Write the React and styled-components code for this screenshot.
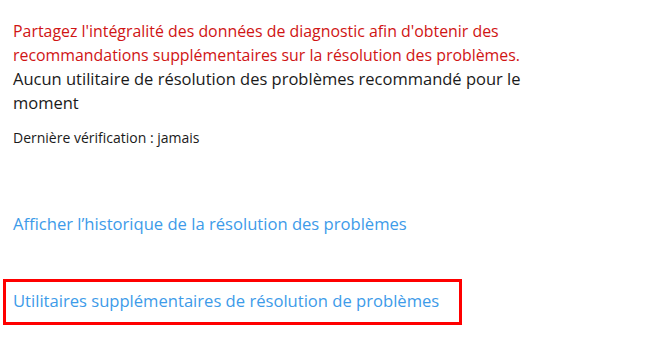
import React from 'react';
import styled, { createGlobalStyle } from 'styled-components';

const GlobalStyle = createGlobalStyle`
  html, body {
    margin: 0;
    padding: 0;
    background: #ffffff;
  }
  body {
    font-family: 'Open Sans', 'Noto Sans', 'Liberation Sans', sans-serif;
  }
`;

// 전체 페이지
const Page = styled.div`
  width: 658px;
  height: 355px;
  box-sizing: border-box;
  padding: 19px 0 0 13px;
  display: flex;
  flex-direction: column;
`;

const Warning = styled.p`
  margin: 0;
  width: 528px;
  font-size: 15.9px;
  line-height: 24px;
  color: #d01414;
`;

const Status = styled.p`
  margin: 0;
  width: 528px;
  font-size: 16.5px;
  line-height: 24px;
  color: #1a1a1a;
`;

const Checked = styled.p`
  margin: 14px 0 0;
  font-size: 14px;
  line-height: 18px;
  color: #1a1a1a;
`;

const Link = styled.a`
  font-size: 16.6px;
  line-height: 24px;
  color: #3d9be9;
  text-decoration: none;
  cursor: pointer;
`;

const HistoryRow = styled.div`
  margin-top: 65px;
  line-height: 24px;
`;

// 빨간 테두리로 강조된 링크
const Highlight = styled.div`
  margin: 43px 0 0 -10px;
  width: 459px;
  height: 46px;
  box-sizing: border-box;
  border: 3px solid #ff0000;
  padding: 7px 0 0 7px;
  line-height: 24px;
`;

export default function App() {
  return (
    <>
      <GlobalStyle />
      <Page>
        <Warning>
          Partagez l'intégralité des données de diagnostic afin d'obtenir des
          recommandations supplémentaires sur la résolution des problèmes.
        </Warning>
        <Status>
          Aucun utilitaire de résolution des problèmes recommandé pour le moment
        </Status>
        <Checked>Dernière vérification : jamais</Checked>
        <HistoryRow>
          <Link>Afficher l’historique de la résolution des problèmes</Link>
        </HistoryRow>
        <Highlight>
          <Link>Utilitaires supplémentaires de résolution de problèmes</Link>
        </Highlight>
      </Page>
    </>
  );
}
